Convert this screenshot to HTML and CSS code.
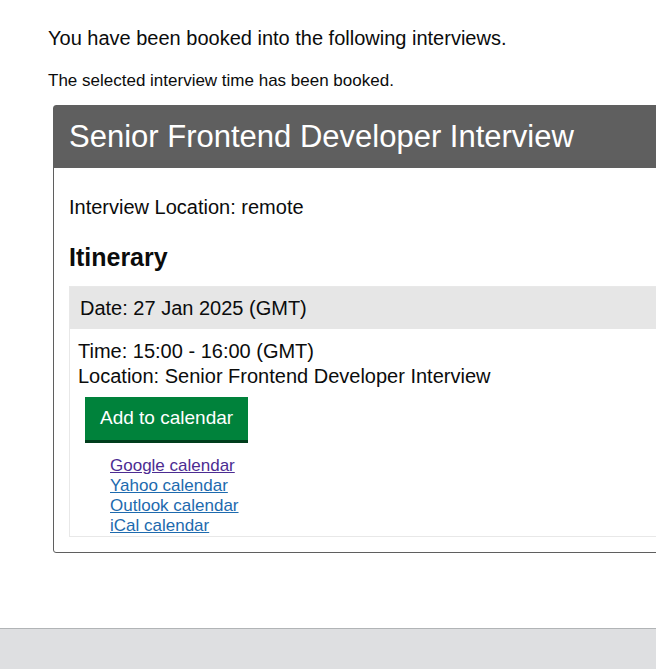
FILE: index.html
```html
<!DOCTYPE html>
<html lang="en">
<head>
<meta charset="utf-8">
<title>Interview booked</title>
<link rel="stylesheet" href="styles.css">
</head>
<body>
<main class="page">
  <p class="lead">You have been booked into the following interviews.</p>
  <p class="note">The selected interview time has been booked.</p>
  <section class="card">
    <h1 class="card-title">Senior Frontend Developer Interview</h1>
    <div class="card-body">
      <p class="location">Interview Location: remote</p>
      <h2 class="itinerary-title">Itinerary</h2>
      <div class="itinerary">
        <div class="date">Date: 27 Jan 2025 (GMT)</div>
        <div class="slot">
          <p class="slot-line">Time: 15:00 - 16:00 (GMT)</p>
          <p class="slot-line">Location: Senior Frontend Developer Interview</p>
          <button class="btn" type="button">Add to calendar</button>
          <ul class="cal-links">
            <li><a class="visited" href="#">Google calendar</a></li>
            <li><a href="#">Yahoo calendar</a></li>
            <li><a href="#">Outlook calendar</a></li>
            <li><a href="#">iCal calendar</a></li>
          </ul>
        </div>
      </div>
    </div>
  </section>
</main>
<footer class="footer"></footer>
</body>
</html>
```
FILE: styles.css
```css
html, body {
  margin: 0;
  padding: 0;
  overflow-x: hidden;
}
body {
  font-family: "Liberation Sans", Arial, Helvetica, sans-serif;
  color: #0b0c0c;
  background: #ffffff;
}
.page {
  padding: 26px 0 75px 48px;
  overflow: hidden;
}
.lead {
  margin: 0;
  font-size: 20px;
  line-height: 25px;
}
.note {
  margin: 20px 0 0 0;
  font-size: 17px;
  line-height: 20px;
}
.card {
  margin: 14px 0 0 5px;
  width: 720px;
  border: 1px solid #5f5f5f;
  border-radius: 3px;
  box-sizing: border-box;
}
.card-title {
  margin: 0;
  background: #5f5f5f;
  color: #ffffff;
  font-weight: normal;
  font-size: 31px;
  line-height: 36px;
  padding: 13px 15px 13px 15px;
}
.card-body {
  padding: 27px 15px 15px 15px;
}
.location {
  margin: 0;
  font-size: 20px;
  line-height: 24px;
}
.itinerary-title {
  margin: 23px 0 14px 0;
  font-size: 25px;
  line-height: 30px;
  font-weight: bold;
}
.itinerary {
  border: 1px solid #e8e8e8;
}
.date {
  background: #e6e6e6;
  font-size: 20px;
  line-height: 24px;
  padding: 9px 10px 9px 10px;
}
.slot {
  padding: 10px 8px 0 8px;
}
.slot-line {
  margin: 0;
  font-size: 20px;
  line-height: 25px;
}
.btn {
  display: block;
  margin: 8px 0 0 7px;
  background: #00823b;
  color: #ffffff;
  border: 0;
  border-bottom: 3px solid #003d1c;
  border-radius: 0;
  font-family: inherit;
  font-size: 19px;
  line-height: 24px;
  padding: 9px 15px 10px 15px;
}
.cal-links {
  list-style: none;
  margin: 13px 0 0 0;
  padding: 0 0 0 32px;
  font-size: 17px;
  line-height: 20px;
}
.cal-links a {
  color: #1d6aae;
  text-decoration: underline;
}
.cal-links a.visited {
  color: #4c2c92;
}
.footer {
  height: 67px;
  background: #dedfe1;
  border-top: 1px solid #b1b4b6;
}
```
